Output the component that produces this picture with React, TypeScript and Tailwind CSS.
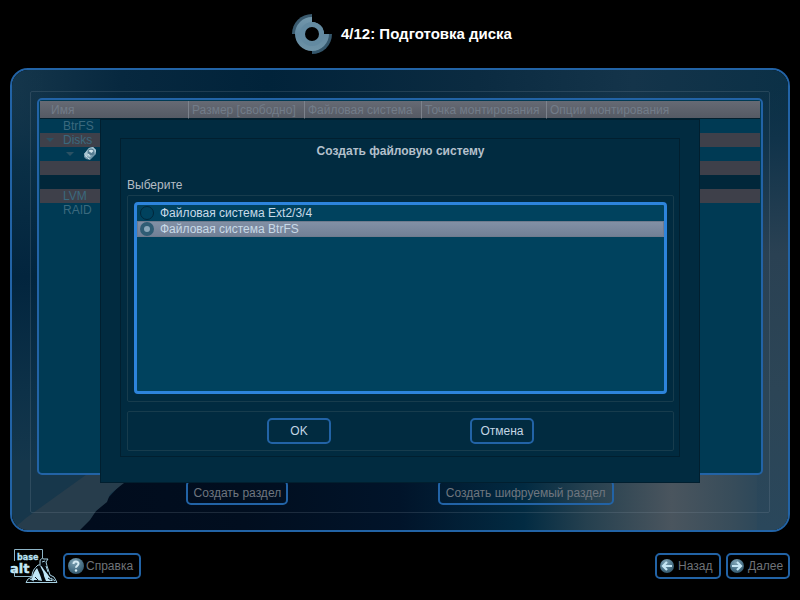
import React from "react";

const columns = [
  { title: "Имя", width: "w-[148px]", pad: "pl-[11px]" },
  { title: "Размер [свободно]", width: "w-[116px]", pad: "pl-[3px]" },
  { title: "Файловая система", width: "w-[117px]", pad: "pl-[3px]" },
  { title: "Точка монтирования", width: "w-[125px]", pad: "pl-[3px]" },
  { title: "Опции монтирования", width: "", pad: "pl-[3px]" },
];

const rows = [
  { name: "BtrFS", tone: "bg-transparent", arrow: false, disk: false },
  { name: "Disks", tone: "bg-[#3e404a]", arrow: true, disk: false },
  { name: "", tone: "bg-transparent", arrow: true, disk: true },
  { name: "", tone: "bg-[#3e404a]", arrow: false, disk: false },
  { name: "", tone: "bg-[#01273a]", arrow: false, disk: false },
  { name: "LVM", tone: "bg-[#3e404a]", arrow: false, disk: false },
  { name: "RAID", tone: "bg-transparent", arrow: false, disk: false },
];

function StepIcon() {
  return (
    <svg width="40" height="40" viewBox="0 0 40 40" aria-hidden="true">
      <defs>
        <linearGradient id="ring" x1="0" y1="0" x2="0" y2="1">
          <stop offset="0" stopColor="#7398ac" />
          <stop offset="0.5" stopColor="#6188a0" />
          <stop offset="1" stopColor="#6f94a8" />
        </linearGradient>
      </defs>
      <path d="M20 0A20 20 0 0 0 0 20H20Z" fill="#39596d" />
      <path d="M40 20A20 20 0 0 1 20 40V20Z" fill="#34566b" />
      <path d="M20 3A17 17 0 1 0 37 20H32A12 12 0 0 0 20 8Z" fill="url(#ring)" />
      <circle cx="20" cy="20" r="12" fill="#638aa1" />
      <circle cx="20" cy="20" r="7" fill="#000" />
    </svg>
  );
}

function DiskIcon() {
  return (
    <svg width="14" height="14" viewBox="0 0 14 14" aria-hidden="true">
      <path d="M1 7L6 1L10 0L13 3L13 7L7 13L3 12L1 10Z" fill="#6f95a8" />
      <path d="M1 7L6 1L10 0L13 3L13 5L7 10L3 9Z" fill="#a9c6d3" />
      <circle cx="8" cy="5" r="3.500" fill="#557c91" />
      <path d="M5.500 4A3 3 0 0 1 10.500 4L8.500 6Z" fill="#cfe3eb" />
      <path d="M2 8.500L4.500 10.500M5 11L6.500 12M5 7L7 8.500" stroke="#dcebf1" strokeWidth="1" />
    </svg>
  );
}

function BaseAltLogo() {
  return (
    <svg width="48" height="38" viewBox="0 0 48 38" role="img" aria-label="base alt">
      <path d="M4.500 14V2.500H32.500V11M4.500 26V29.500H22" fill="none" stroke="#8db4c6" />
      <text x="7" y="13" fontSize="8" fontWeight="700" fontFamily="'DejaVu Sans', sans-serif" fill="#b9e0f2" stroke="#b9e0f2" strokeWidth="0.300">base</text>
      <text x="0" y="26" fontSize="13" fontWeight="700" fontFamily="'DejaVu Sans', sans-serif" fill="#c4e8f8" stroke="#c4e8f8" strokeWidth="0.400">alt</text>
      <path
        d="M30 14C30 12 32 11 34 12L38 12L36 15C37 20 39 24 40 28L44 30L47 35.500H16L18 32L22 30C22 24 25 21 26 20L28 18L30 18Z"
        fill="#03080c"
        stroke="#a6cfe0"
      />
      <path d="M27 21C24 24 23 28 22 31L20 33L27 33L32 34C31 30 29 25 27 21Z" fill="#bfe6f7" />
      <path d="M30 18C31 22 34 25 34 29L36 34L43 34C40 31 37 26 35 24C33 22 33 20 30 18Z" fill="#bfe6f7" />
      <path d="M32 15L35 14M36 19L38 25M20 32L24 34M41 31L45 34" stroke="#a6cfe0" />
      <path d="M25 30L28 33M38 31L41 33" stroke="#061019" />
    </svg>
  );
}

function RoundIcon({ kind }: { kind: "help" | "back" | "next" }) {
  return (
    <svg width="16" height="16" viewBox="0 0 16 16" className="shrink-0" aria-hidden="true">
      <defs>
        <radialGradient id={"ball-" + kind} cx="0.4" cy="0.25" r="0.8">
          <stop offset="0" stopColor="#7fa3b4" />
          <stop offset="0.6" stopColor="#4b7389" />
          <stop offset="1" stopColor="#31566b" />
        </radialGradient>
      </defs>
      <circle cx="8" cy="8" r={kind === "help" ? 8 : 7} fill={"url(#ball-" + kind + ")"} />
      {kind === "help" && (
        <>
          <path d="M5.500 6C5.500 2.800 10.500 2.800 10.500 5.800C10.500 7.600 8 7.800 8 9.700" fill="none" stroke="#d5ebf4" strokeWidth="2" />
          <circle cx="8" cy="12.500" r="1.200" fill="#d5ebf4" />
        </>
      )}
      {kind === "back" && <path d="M13 8H4M8 4L4 8L8 12" fill="none" stroke="#c5e6f4" strokeWidth="2.200" />}
      {kind === "next" && <path d="M3 8H12M8 4L12 8L8 12" fill="none" stroke="#c5e6f4" strokeWidth="2.200" />}
    </svg>
  );
}

function Backdrop() {
  return (
    <svg className="absolute inset-0 h-full w-full" viewBox="0 0 776 460" preserveAspectRatio="none" aria-hidden="true">
      <defs>
        <linearGradient id="top" x1="0" y1="0" x2="1" y2="0">
          <stop offset="0" stopColor="#15364b" />
          <stop offset="0.14" stopColor="#07283f" />
          <stop offset="0.33" stopColor="#01233a" />
          <stop offset="0.6" stopColor="#0b2b41" />
          <stop offset="0.8" stopColor="#14344a" />
          <stop offset="1" stopColor="#0b3046" />
        </linearGradient>
        <linearGradient id="floor" x1="0" y1="0" x2="1" y2="0">
          <stop offset="0" stopColor="#010b1c" />
          <stop offset="0.3" stopColor="#010e1f" />
          <stop offset="0.5" stopColor="#01142a" />
          <stop offset="0.66" stopColor="#022b42" />
          <stop offset="0.74" stopColor="#25404f" />
          <stop offset="0.85" stopColor="#4a555e" />
          <stop offset="0.93" stopColor="#374c5a" />
          <stop offset="1" stopColor="#21435a" />
        </linearGradient>
        <linearGradient id="left" x1="0" y1="0" x2="0" y2="1">
          <stop offset="0" stopColor="#15364b" stopOpacity="0" />
          <stop offset="0.2" stopColor="#0a2f46" />
          <stop offset="0.45" stopColor="#02253e" />
          <stop offset="0.7" stopColor="#0d3148" />
          <stop offset="1" stopColor="#1b3c50" />
        </linearGradient>
        <linearGradient id="side" x1="0" y1="0" x2="0" y2="1">
          <stop offset="0" stopColor="#0b3046" stopOpacity="0" />
          <stop offset="0.15" stopColor="#10334a" />
          <stop offset="0.4" stopColor="#2a4153" />
          <stop offset="0.7" stopColor="#2c4556" />
          <stop offset="1" stopColor="#2a475b" />
        </linearGradient>
      </defs>
      <rect width="776" height="460" fill="url(#top)" />
      <rect width="30" height="460" fill="url(#left)" />
      <rect y="390" width="776" height="70" fill="url(#floor)" />
      <rect x="745" width="31" height="460" fill="url(#side)" />
      <path d="M0 390H130L110 413L66 460H0Z" fill="#17374b" />
      <path d="M14 448L78 402H118L112 413L98 424L95 432L84 441L78 450L68 460H0Z" fill="#273d4c" />
    </svg>
  );
}

const outline = "flex items-center rounded-[5px] border-2 border-[#2263a6]";

export default function App() {
  return (
    <div className="relative flex min-h-screen flex-col bg-black font-['Liberation_Sans',Arial,sans-serif] text-[12px] leading-[14px]">
      <header className="flex h-[68px] items-center justify-center gap-[9px] pl-[4px]">
        <StepIcon />
        <h1 className="text-[15px] leading-[18px] font-bold text-white">4/12: Подготовка диска</h1>
      </header>

      <main className="relative mx-[10px] flex flex-1 flex-col overflow-hidden rounded-[18px] border-2 border-[#2263a6] px-[18px] pt-[21px] pb-[17px]">
        <Backdrop />
        <section className="relative flex flex-1 flex-col rounded-[2px] border border-[#8a9aa833] px-[6px] pt-[6px] pb-[7px]">
          <div className="flex-1 overflow-hidden rounded-[5px] border-2 border-[#2263a6] bg-[#003a54] p-px">
            <table className="w-full table-fixed border-separate border-spacing-0 text-left text-[#3b697e]">
              <thead>
                <tr className="bg-linear-to-b from-[#666a74] to-[#545963] text-[#727c89]">
                  {columns.map((c) => (
                    <th
                      key={c.title}
                      className={`${c.width} ${c.pad} h-[18px] border-b border-l border-b-[#02202f] border-l-[#7c828c] py-0 pr-0 font-normal whitespace-nowrap first:border-l-0`}
                    >
                      {c.title}
                    </th>
                  ))}
                </tr>
              </thead>
              <tbody>
                {rows.map((r, i) => (
                  <tr key={i} className={r.tone}>
                    <td colSpan={5} className="h-[14px] p-0">
                      <div className={`flex h-[14px] items-center ${r.disk ? "pl-[26px]" : "pl-[6px]"}`}>
                        <span className="w-[17px]">
                          {r.arrow && (
                            <svg width="8" height="4" viewBox="0 0 8 4" className="block" aria-hidden="true">
                              <path d="M0 0H8L4 4Z" fill="#2a5163" />
                            </svg>
                          )}
                        </span>
                        {r.disk ? <DiskIcon /> : r.name}
                      </div>
                    </td>
                  </tr>
                ))}
              </tbody>
            </table>
          </div>
          <div className="mt-[5px] flex justify-evenly text-[#6f767f]">
            <button type="button" className={`${outline} h-[25px] w-[102px] justify-center whitespace-nowrap`}>Создать раздел</button>
            <button type="button" className={`${outline} h-[25px] w-[176px] justify-center whitespace-nowrap`}>Создать шифруемый раздел</button>
          </div>
        </section>
      </main>

      <footer className="flex h-[68px] items-center gap-[5px] px-[10px] text-[#6f7378]">
        <BaseAltLogo />
        <button type="button" className={`${outline} h-[26px] w-[78px] gap-[2px] pl-[3px]`}>
          <RoundIcon kind="help" />
          Справка
        </button>
        <button type="button" className={`${outline} ml-auto h-[26px] w-[66px] gap-[3px] pl-[2px]`}>
          <RoundIcon kind="back" />
          Назад
        </button>
        <button type="button" className={`${outline} h-[26px] w-[64px] gap-[3px] pl-px`}>
          <RoundIcon kind="next" />
          Далее
        </button>
      </footer>

      <div className="absolute inset-0 flex items-center justify-center pt-[2px]">
        <div role="dialog" aria-labelledby="dialog-title" className="w-3/4 border border-[#011f2f] bg-[#012b40] px-[19px] pt-[18px] pb-[25px]">
          <div className="border border-[#011f2f] pr-[5px] pb-[5px] pl-[6px]">
            <h2 id="dialog-title" className="text-center leading-[24px] font-bold text-[#b4c0cc]">Создать файловую систему</h2>
            <p id="choose" className="mt-[14px] mb-[2px] leading-[16px] text-[#b4bcc4]">Выберите</p>
            <div className="rounded-[2px] border border-[#173c4d] px-[6px] pt-[6px] pb-[7px]">
              <div role="radiogroup" aria-labelledby="choose" className="h-[192px] rounded-[4px] border-3 border-[#2d84dc] bg-[#00425e] text-[#c8dae8]">
                <label className="flex h-[16px] items-center gap-[6px] pl-[3px]">
                  <input type="radio" name="fs" className="h-[14px] w-[14px] appearance-none rounded-full border border-[#01263a]" />
                  Файловая система Ext2/3/4
                </label>
                <label className="flex h-[16px] items-center gap-[6px] border border-[#6f7b8e] bg-linear-to-b from-[#8290a5] to-[#728096] pl-[2px]">
                  <input type="radio" name="fs" defaultChecked className="h-[14px] w-[14px] appearance-none rounded-full border-4 border-[#2f5c74] bg-[#8aa7ba]" />
                  Файловая система BtrFS
                </label>
              </div>
            </div>
            <div className="mt-[9px] flex h-[40px] items-center justify-evenly rounded-[2px] border border-[#173c4d] text-[#c4d6e4]">
              <button type="button" className={`${outline} h-[26px] w-[64px] justify-center`}>OK</button>
              <button type="button" className={`${outline} h-[26px] w-[64px] justify-center`}>Отмена</button>
            </div>
          </div>
        </div>
      </div>
    </div>
  );
}
